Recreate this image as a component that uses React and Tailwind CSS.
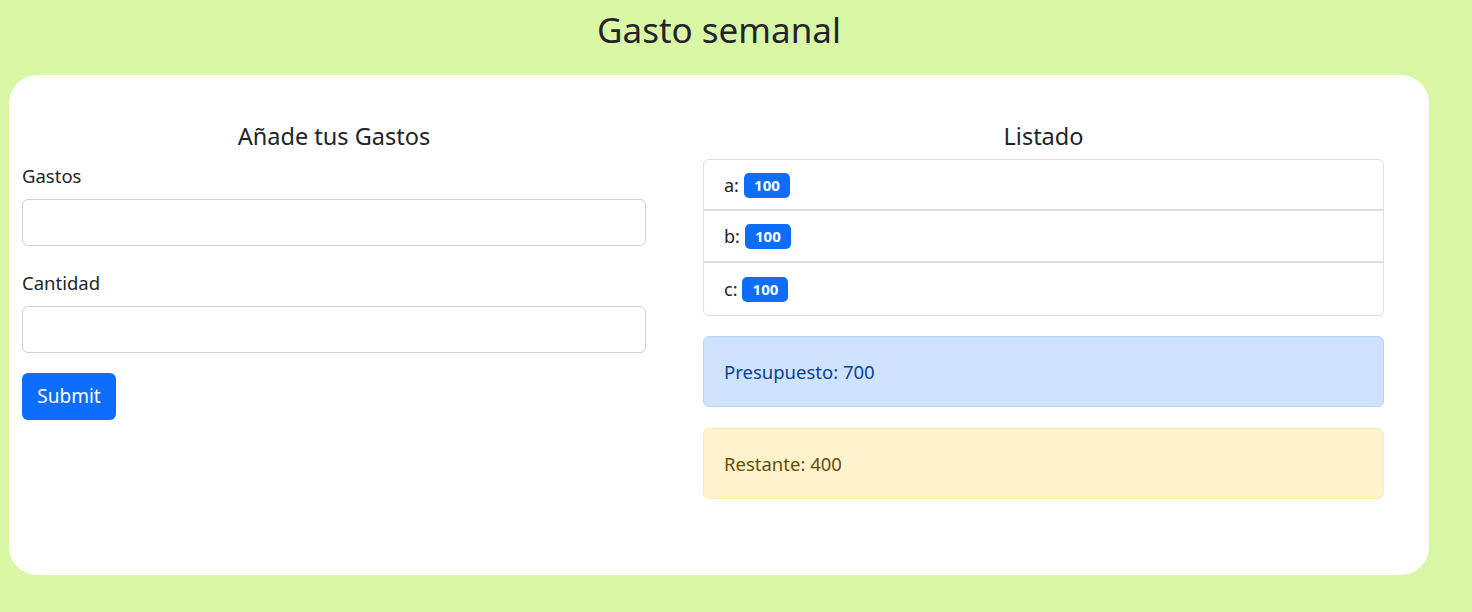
import React from "react";

const gastos = [
  { nombre: "a", cantidad: 100 },
  { nombre: "b", cantidad: 100 },
  { nombre: "c", cantidad: 100 },
];

export default function App() {
  return (
    <div
      className="min-h-screen bg-[#daf7a6] pt-[5px] text-[#212529]"
      style={{ fontFamily: '"Noto Sans", "Open Sans", sans-serif' }}
    >
      <div className="ml-[9px] w-[1420px]">
        <h1 className="h-[47px] text-center text-[35px] leading-[50px]">Gasto semanal</h1>

        <div className="mt-[23px] flex h-[500px] gap-[57px] rounded-[28px] bg-white pl-[13px] pt-[47px]">
          {/* formulario */}
          <div className="w-[624px]">
            <h4 className="mb-[13px] text-center text-[23.5px] leading-[29px]">Añade tus Gastos</h4>
            <form onSubmit={(e) => e.preventDefault()}>
              <label className="mb-[11px] block text-[18.5px] leading-[24px]">Gastos</label>
              <input
                type="text"
                className="mb-[25px] block h-[47px] w-full rounded-[6px] border border-[#ced4da] px-4 outline-none"
              />
              <label className="mb-[11px] block text-[18.5px] leading-[24px]">Cantidad</label>
              <input
                type="number"
                className="block h-[47px] w-full rounded-[6px] border border-[#ced4da] px-4 outline-none"
              />
              <button
                type="submit"
                className="mt-[20px] h-[47px] w-[94px] rounded-[6px] bg-[#0d6efd] text-[19px] text-white"
              >
                Submit
              </button>
            </form>
          </div>

          {/* listado */}
          <div className="w-[681px]">
            <h4 className="mb-[8px] text-center text-[23.5px] leading-[29px]">Listado</h4>
            <ul className="divide-y-2 divide-[#dfdfdf] rounded-[6px] border border-[#dfdfdf]">
              {gastos.map((g, i) => (
                <li
                  key={g.nombre}
                  className={`flex items-center gap-[5px] px-[20px] pt-[1px] text-[18px] ${i === 0 ? "h-[51px]" : "h-[52px]"}`}
                >
                  <span>{g.nombre}:</span>
                  <span className="flex h-[25px] w-[46px] items-center justify-center rounded-[5px] bg-[#0d6efd] text-[15px] font-bold text-white">
                    {g.cantidad}
                  </span>
                </li>
              ))}
            </ul>
            <div className="mt-[20px] flex h-[71px] items-center rounded-[6px] border border-[#b6d4fe] bg-[#cfe2ff] px-[20px] text-[18.5px] text-[#084298]">
              Presupuesto: 700
            </div>
            <div className="mt-[21px] flex h-[71px] items-center rounded-[6px] border border-[#ffecb5] bg-[#fff3cd] px-[20px] text-[18.5px] text-[#664d03]">
              Restante: 400
            </div>
          </div>
        </div>
      </div>
    </div>
  );
}
